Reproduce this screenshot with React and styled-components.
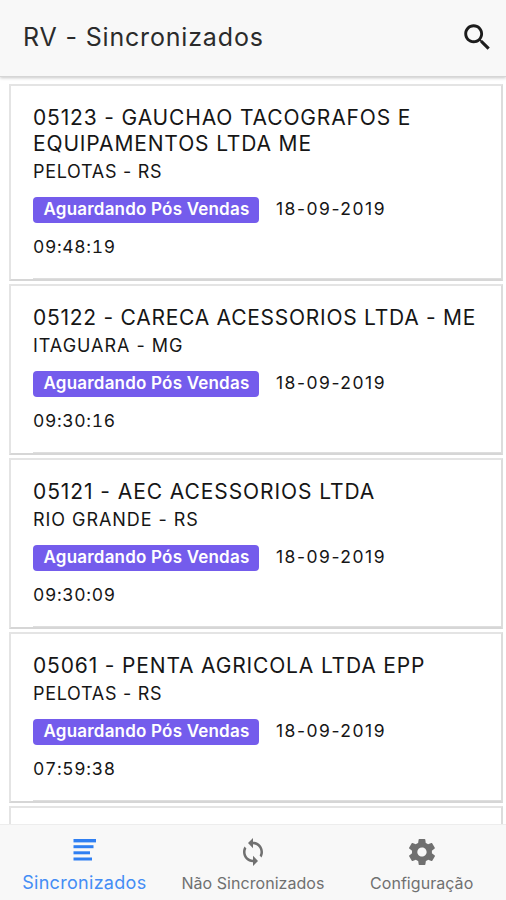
import React from "react";
import styled, { createGlobalStyle } from "styled-components";

import { IoMdSearch, IoMdSync, IoMdSettings } from "react-icons/io";

const GlobalStyle = createGlobalStyle`
  * {
    box-sizing: border-box;
  }

  body {
    margin: 0;
    background-color: #fff;
    font-family: "Inter", "Open Sans", sans-serif;
    color: #161616;
  }
`;

const Page = styled.div`
  width: 100%;
  height: 100vh;
  display: flex;
  flex-direction: column;
  overflow: hidden;
`;

const Header = styled.header`
  z-index: 1;
  height: 77px;
  flex-shrink: 0;
  padding: 0 12px 3px 23px;
  display: flex;
  align-items: center;
  justify-content: space-between;
  background-color: #f8f8f8;
  border-bottom: 1px solid #d6d6d6;
  box-shadow: 0 1px 3px rgba(0, 0, 0, 0.22);
`;

const HeaderTitle = styled.h1`
  margin: 0;
  font-size: 25px;
  font-weight: 400;
  letter-spacing: 0.83px;
  color: #2b2b2b;
`;

const SearchButton = styled.button`
  display: flex;
  padding: 0;
  border: none;
  background: none;
  color: #1c1c1c;
`;

const List = styled.main`
  flex: 1;
  min-height: 0;
  overflow: hidden;
  padding: 7px 3px 0 9px;
  display: flex;
  flex-direction: column;
  gap: 3px;
`;

const Card = styled.article`
  flex-shrink: 0;
  padding: 19px 0 0 22px;
  border: 2px solid #e4e4e4;
  border-right-color: #dcdcdc;
  border-bottom-color: #d6d6d6;
`;

const CardTitle = styled.h2`
  margin: 0;
  padding-right: 10px;
  font-size: 21px;
  font-weight: 400;
  line-height: 26px;
  letter-spacing: ${(props) => props.$spacing};
`;

const City = styled.p`
  margin: 3px 0 13px;
  font-size: 18px;
  line-height: 24px;
  letter-spacing: ${(props) => props.$spacing};
`;

const StatusRow = styled.div`
  height: 26px;
  display: flex;
  gap: 17px;
`;

const Badge = styled.span`
  width: 226px;
  padding-left: 1px;
  border-radius: 4px;
  background-color: #745cec;
  color: #fff;
  font-size: 17px;
  font-weight: 600;
  line-height: 24px;
  letter-spacing: 0.2px;
  text-align: center;
  white-space: nowrap;
`;

const DateText = styled.span`
  font-size: 17.5px;
  line-height: 24px;
  letter-spacing: 1.5px;
`;

const Time = styled.p`
  margin: 11px 0 0;
  height: 45px;
  font-size: 17.5px;
  font-variant-numeric: tabular-nums;
  line-height: 25px;
  letter-spacing: 0.65px;
  border-bottom: 1px solid #dedede;
`;

const TabBar = styled.nav`
  height: 76px;
  flex-shrink: 0;
  display: grid;
  grid-template-columns: repeat(3, 1fr);
  background-color: #f8f8f8;
  border-top: 1px solid #ededed;
`;

const Tab = styled.div`
  display: flex;
  flex-direction: column;
  align-items: center;
  color: ${(props) => (props.$active ? "#448df5" : "#707070")};
`;

const TabIcon = styled.div`
  height: 46px;
  padding-top: ${(props) => (props.$active ? "13px" : "11px")};
`;

const TabLabel = styled.span`
  font-size: ${(props) => (props.$active ? "18px" : "16px")};
  line-height: 24px;
  letter-spacing: ${(props) => (props.$active ? "0.3px" : "0.05px")};
  white-space: nowrap;
`;

const vendas = [
  {
    nome: "05123 - GAUCHAO TACOGRAFOS E EQUIPAMENTOS LTDA ME",
    nomeSpacing: "0.85px",
    cidade: "PELOTAS - RS",
    cidadeSpacing: "0.7px",
    hora: "09:48:19",
  },
  {
    nome: "05122 - CARECA ACESSORIOS LTDA - ME",
    nomeSpacing: "0.74px",
    cidade: "ITAGUARA - MG",
    cidadeSpacing: "0.97px",
    hora: "09:30:16",
  },
  {
    nome: "05121 - AEC ACESSORIOS LTDA",
    nomeSpacing: "0.92px",
    cidade: "RIO GRANDE - RS",
    cidadeSpacing: "0.95px",
    hora: "09:30:09",
  },
  {
    nome: "05061 - PENTA AGRICOLA LTDA EPP",
    nomeSpacing: "0.84px",
    cidade: "PELOTAS - RS",
    cidadeSpacing: "0.7px",
    hora: "07:59:38",
  },
];

function ListIcon() {
  return (
    <svg width="24" height="24" viewBox="0 0 24 24" fill="#2f7ff2">
      <rect x="1.5" y="1" width="22.5" height="3.4" />
      <rect x="1.5" y="7.2" width="20" height="3" />
      <rect x="1.5" y="13.3" width="16.5" height="3" />
      <rect x="1.5" y="19.5" width="18.5" height="3" />
    </svg>
  );
}

function VendaCard({ venda }) {
  return (
    <Card>
      <CardTitle $spacing={venda.nomeSpacing}>{venda.nome}</CardTitle>
      <City $spacing={venda.cidadeSpacing}>{venda.cidade}</City>
      <StatusRow>
        <Badge>Aguardando Pós Vendas</Badge>
        <DateText>18-09-2019</DateText>
      </StatusRow>
      <Time>{venda.hora}</Time>
    </Card>
  );
}

function App() {
  return (
    <Page>
      <GlobalStyle />
      <Header>
        <HeaderTitle>RV - Sincronizados</HeaderTitle>
        <SearchButton aria-label="Buscar">
          <IoMdSearch size={34} />
        </SearchButton>
      </Header>

      <List>
        {vendas.map((venda) => (
          <VendaCard key={venda.nome} venda={venda} />
        ))}
        <Card />
      </List>

      <TabBar>
        <Tab $active>
          <TabIcon $active>
            <ListIcon />
          </TabIcon>
          <TabLabel $active>Sincronizados</TabLabel>
        </Tab>
        <Tab>
          <TabIcon>
            <IoMdSync size={32} />
          </TabIcon>
          <TabLabel>Não Sincronizados</TabLabel>
        </Tab>
        <Tab>
          <TabIcon>
            <IoMdSettings size={32} />
          </TabIcon>
          <TabLabel>Configuração</TabLabel>
        </Tab>
      </TabBar>
    </Page>
  );
}

export default App;
